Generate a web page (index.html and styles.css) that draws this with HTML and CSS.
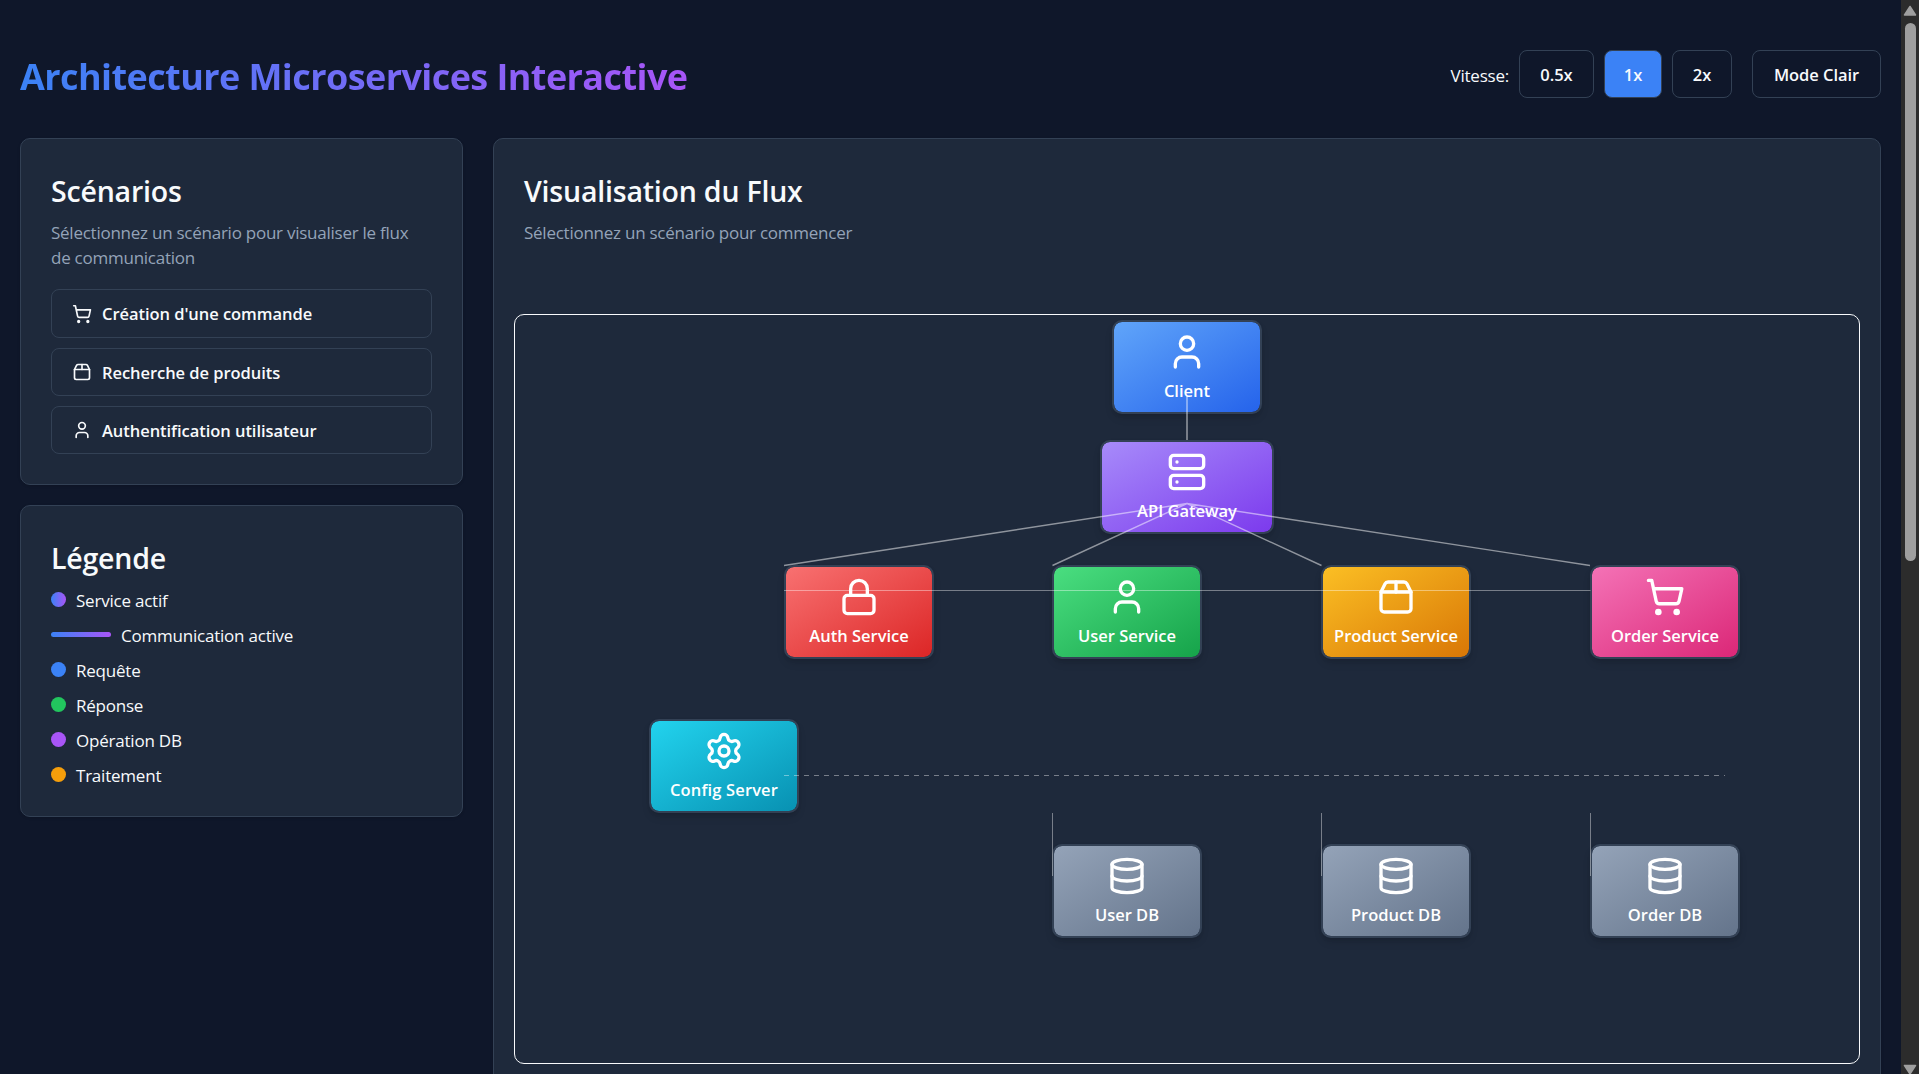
FILE: index.html
```html
<!DOCTYPE html>
<html lang="fr">
<head>
<meta charset="utf-8">
<title>Architecture Microservices Interactive</title>
<link rel="stylesheet" href="styles.css">
</head>
<body>
<svg class="sprite" aria-hidden="true">
  <symbol id="user" viewBox="0 0 24 24"><path d="M19 21v-2a4 4 0 0 0-4-4H9a4 4 0 0 0-4 4v2"/><circle cx="12" cy="7" r="4"/></symbol>
  <symbol id="server" viewBox="0 0 24 24"><rect width="20" height="8" x="2" y="2" rx="2"/><rect width="20" height="8" x="2" y="14" rx="2"/><path d="M6 6h.01M6 18h.01"/></symbol>
  <symbol id="lock" viewBox="0 0 24 24"><rect width="18" height="11" x="3" y="11" rx="2"/><path d="M7 11V7a5 5 0 0 1 10 0v4"/></symbol>
  <symbol id="package" viewBox="0 0 24 24"><path d="M3 9h18v10a2 2 0 0 1-2 2H5a2 2 0 0 1-2-2V9Z"/><path d="m3 9 2.45-4.9A2 2 0 0 1 7.24 3h9.52a2 2 0 0 1 1.8 1.1L21 9"/><path d="M12 3v6"/></symbol>
  <symbol id="cart" viewBox="0 0 24 24"><circle cx="8" cy="21" r="1"/><circle cx="19" cy="21" r="1"/><path d="M2.05 2.05h2l2.66 12.42a2 2 0 0 0 2 1.58h9.78a2 2 0 0 0 1.95-1.57l1.65-7.43H5.12"/></symbol>
  <symbol id="database" viewBox="0 0 24 24"><ellipse cx="12" cy="5" rx="9" ry="3"/><path d="M3 5v14a9 3 0 0 0 18 0V5"/><path d="M3 12a9 3 0 0 0 18 0"/></symbol>
  <symbol id="settings" viewBox="0 0 24 24"><path d="M9.671 4.136a2.34 2.34 0 0 1 4.659 0 2.34 2.34 0 0 0 3.319 1.915 2.34 2.34 0 0 1 2.33 4.033 2.34 2.34 0 0 0 0 3.831 2.34 2.34 0 0 1-2.33 4.033 2.34 2.34 0 0 0-3.319 1.915 2.34 2.34 0 0 1-4.659 0 2.34 2.34 0 0 0-3.32-1.915 2.34 2.34 0 0 1-2.33-4.033 2.34 2.34 0 0 0 0-3.831A2.34 2.34 0 0 1 6.35 6.051a2.34 2.34 0 0 0 3.319-1.915"/><circle cx="12" cy="12" r="3"/></symbol>
</svg>
<div class="page">
  <header class="header">
    <h1 class="title">Architecture Microservices Interactive</h1>
    <div class="controls">
      <span class="speed-label">Vitesse:</span>
      <button class="btn speed-half">0.5x</button>
      <button class="btn speed-one active">1x</button>
      <button class="btn speed-two">2x</button>
      <button class="btn mode">Mode Clair</button>
    </div>
  </header>
  <main class="layout">
    <div class="sidebar">
      <section class="card">
        <h2 class="card-title">Scénarios</h2>
        <p class="card-text">Sélectionnez un scénario pour visualiser le flux<br>de communication</p>
        <div class="scenarios">
          <button class="scenario first"><svg class="icon"><use href="#cart"/></svg><span>Création d'une commande</span></button>
          <button class="scenario"><svg class="icon"><use href="#package"/></svg><span>Recherche de produits</span></button>
          <button class="scenario"><svg class="icon"><use href="#user"/></svg><span>Authentification utilisateur</span></button>
        </div>
      </section>
      <section class="card legend">
        <h2 class="card-title">Légende</h2>
        <ul class="legend-list">
          <li><i class="dot active-dot"></i><span>Service actif</span></li>
          <li><i class="bar"></i><span>Communication active</span></li>
          <li><i class="dot request"></i><span>Requête</span></li>
          <li><i class="dot response"></i><span>Réponse</span></li>
          <li><i class="dot db-op"></i><span>Opération DB</span></li>
          <li><i class="dot processing"></i><span>Traitement</span></li>
        </ul>
      </section>
    </div>
    <section class="card flow">
      <div class="flow-head">
        <h2 class="card-title">Visualisation du Flux</h2>
        <p class="card-text">Sélectionnez un scénario pour commencer</p>
      </div>
      <div class="diagram">
        <div class="node client"><svg class="icon"><use href="#user"/></svg><span>Client</span></div>
        <div class="node gateway"><svg class="icon"><use href="#server"/></svg><span>API Gateway</span></div>
        <div class="node auth"><svg class="icon"><use href="#lock"/></svg><span>Auth Service</span></div>
        <div class="node users"><svg class="icon"><use href="#user"/></svg><span>User Service</span></div>
        <div class="node products"><svg class="icon"><use href="#package"/></svg><span>Product Service</span></div>
        <div class="node orders"><svg class="icon"><use href="#cart"/></svg><span>Order Service</span></div>
        <div class="node config"><svg class="icon"><use href="#settings"/></svg><span>Config Server</span></div>
        <div class="node db user-db"><svg class="icon"><use href="#database"/></svg><span>User DB</span></div>
        <div class="node db product-db"><svg class="icon"><use href="#database"/></svg><span>Product DB</span></div>
        <div class="node db order-db"><svg class="icon"><use href="#database"/></svg><span>Order DB</span></div>
        <svg class="links" viewBox="0 0 1344 748">
          <path class="main" d="M672 81V125"/>
          <path class="fan" d="M672 188.5 269 250.5M672 188.5 537.5 250.5M672 188.5 806.5 250.5M672 188.5 1075 250.5"/>
          <path class="thin" d="M269 275.5H1075.5"/>
          <path class="dashed" d="M269 460.5H1210"/>
          <path class="thin" d="M537.5 498V561M806.5 498V561M1075.5 498V561"/>
        </svg>
      </div>
    </section>
  </main>
</div>
<div class="scrollbar"><svg class="arrow" viewBox="0 0 18 23"><path d="M9 6.5 14.5 15H3.5Z"/></svg><div class="thumb"></div><svg class="arrow down" viewBox="0 0 18 10"><path d="M3.5 1.5H14.5L9 10Z"/></svg></div>
</body>
</html>
```
FILE: styles.css
```css
* { box-sizing: border-box; }
body {
  margin: 0;
  height: 1074px;
  overflow: hidden;
  display: flex;
  background: #0f172a;
  color: #f8fafc;
  font: 17px/25px "Segoe UI", "Open Sans", sans-serif;
  letter-spacing: -0.22px;
}
h1, h2, p, ul { margin: 0; padding: 0; }
.sprite { position: absolute; width: 0; height: 0; }
.page { flex: 1; min-width: 0; padding: 50px 20px 0; }
.header { display: flex; justify-content: space-between; align-items: center; height: 48px; margin-bottom: 40px; }
.title {
  margin-top: 5px;
  font-size: 36px;
  line-height: 50px;
  font-weight: 700;
  letter-spacing: -0.58px;
  white-space: nowrap;
  color: transparent;
  background: linear-gradient(to right, #3b82f6, #a855f7);
  background-clip: text;
  -webkit-background-clip: text;
}
.controls { display: flex; align-items: center; gap: 10px; white-space: nowrap; }
.speed-label { padding-top: 2px; }
.btn, .scenario {
  height: 48px;
  padding: 0;
  border: 1px solid #334155;
  border-radius: 8px;
  background: transparent;
  color: inherit;
  font: 600 16.5px/25px "Segoe UI", "Open Sans", sans-serif;
  letter-spacing: -0.05px;
}
.speed-half { width: 75px; }
.speed-one { width: 58px; }
.speed-two { width: 60px; }
.mode { width: 129px; margin-left: 10px; }
.active { background: #3b82f6; }
.layout { display: grid; grid-template-columns: 443px 1fr; gap: 30px; align-items: start; }
.sidebar { display: flex; flex-direction: column; gap: 20px; }
.card {
  padding: 30px;
  border: 1px solid #334155;
  border-radius: 10px;
  background: #1e293b;
  box-shadow: 0 1px 3px rgb(0 0 0 / .15);
}
.card-title {
  padding-top: 2px;
  margin-bottom: 9px;
  font-size: 28.5px;
  line-height: 40px;
  font-weight: 600;
  letter-spacing: -0.2px;
  white-space: nowrap;
}
.card-text { color: #94a3b8; letter-spacing: -0.25px; white-space: nowrap; }
.scenarios { display: flex; flex-direction: column; gap: 10px; margin-top: 19px; }
.scenario { display: flex; align-items: center; gap: 10px; padding: 0 20px; white-space: nowrap; }
.scenario.first { height: 49px; }
.icon { width: 20px; height: 20px; flex: none; fill: none; stroke: currentColor; stroke-width: 2; stroke-linecap: round; stroke-linejoin: round; }
.legend { height: 312px; }
.legend-list { display: flex; flex-direction: column; gap: 10px; list-style: none; }
.legend-list li { display: flex; align-items: center; gap: 10px; height: 25px; }
.legend-list span { padding-top: 1px; }
.dot { width: 15px; height: 15px; border-radius: 50%; }
.bar { width: 60px; height: 5px; border-radius: 3px; background: linear-gradient(to right, #3b82f6, #a855f7); }
.active-dot { background: linear-gradient(to right, #3b82f6, #a855f7); }
.request { background: #3b82f6; }
.response { background: #22c55e; }
.db-op { background: #a855f7; }
.processing { background: #f59e0b; }
.flow { height: 960px; padding: 0 20px; }
.flow-head { height: 175px; padding: 30px 10px 0; }
/* Canvas where the services are pinned */
.diagram { position: relative; height: 750px; border: 1px solid #f8fafc; border-radius: 10px; }
.node {
  position: absolute;
  width: 150px;
  height: 94px;
  padding-top: 10px;
  display: flex;
  flex-direction: column;
  align-items: center;
  gap: 6px;
  border: 2px solid #334155;
  border-radius: 10px;
  background-clip: padding-box;
  box-shadow: 0 5px 8px -1px rgb(0 0 0 / .12), 0 2px 5px -2px rgb(0 0 0 / .12);
  font-size: 16.5px;
  font-weight: 600;
  letter-spacing: 0;
  color: #fff;
  white-space: nowrap;
}
.node .icon { width: 40px; height: 40px; }
.client { left: 597px; top: 5px; background-image: linear-gradient(to bottom right, #60a5fa, #2563eb); }
.gateway { left: 585px; top: 125px; width: 174px; background-image: linear-gradient(to bottom right, #a78bfa, #7c3aed); }
.auth { left: 269px; top: 250px; background-image: linear-gradient(to bottom right, #f87171, #dc2626); }
.users { left: 537px; top: 250px; background-image: linear-gradient(to bottom right, #4ade80, #16a34a); }
.products { left: 806px; top: 250px; background-image: linear-gradient(to bottom right, #fbbf24, #d97706); }
.orders { left: 1075px; top: 250px; background-image: linear-gradient(to bottom right, #f472b6, #db2777); }
.config { left: 134px; top: 404px; background-image: linear-gradient(to bottom right, #22d3ee, #0891b2); }
.config span { letter-spacing: 0.15px; }
.db { top: 529px; background-image: linear-gradient(to bottom right, #94a3b8, #64748b); }
.user-db { left: 537px; }
.product-db { left: 806px; }
.order-db { left: 1075px; }
.links { position: absolute; left: 0; top: 0; width: 1344px; height: 748px; fill: none; stroke: #fff; }
.main { stroke-width: 2; opacity: .4; }
.fan { stroke-width: 1.4; opacity: .5; }
.thin { stroke-width: 1; opacity: .4; }
.dashed { stroke-width: 1; stroke-dasharray: 5 5; opacity: .4; }
.scrollbar { width: 18px; flex: none; display: flex; flex-direction: column; align-items: center; background: #2c2c2c; }
.arrow { width: 18px; height: 23px; fill: #9f9f9f; stroke: #9f9f9f; stroke-width: 1.5; stroke-linejoin: round; }
.thumb { width: 11px; height: 538px; border-radius: 6px; background: #9f9f9f; }
.down { height: 10px; margin-top: auto; }
```
